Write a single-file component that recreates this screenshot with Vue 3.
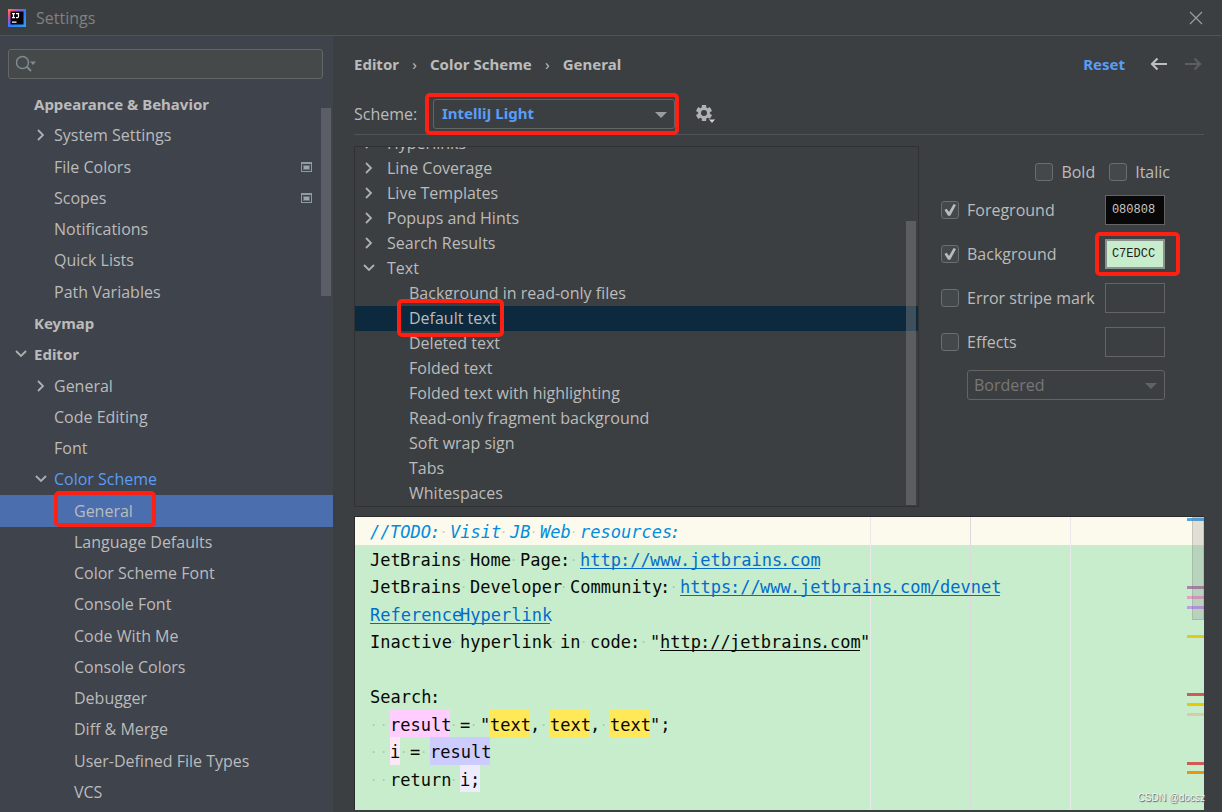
<script setup>
import { ref } from 'vue'

const nav = [
  { label: 'Appearance & Behavior', level: 0, bold: true },
  { label: 'System Settings', level: 1, arrow: 'right' },
  { label: 'File Colors', level: 1, project: true },
  { label: 'Scopes', level: 1, project: true },
  { label: 'Notifications', level: 1 },
  { label: 'Quick Lists', level: 1 },
  { label: 'Path Variables', level: 1 },
  { label: 'Keymap', level: 0, bold: true },
  { label: 'Editor', level: 0, bold: true, arrow: 'down' },
  { label: 'General', level: 1, arrow: 'right' },
  { label: 'Code Editing', level: 1 },
  { label: 'Font', level: 1 },
  { label: 'Color Scheme', level: 1, arrow: 'down', accent: true },
  { label: 'General', level: 2, selected: true },
  { label: 'Language Defaults', level: 2 },
  { label: 'Color Scheme Font', level: 2 },
  { label: 'Console Font', level: 2 },
  { label: 'Code With Me', level: 2 },
  { label: 'Console Colors', level: 2 },
  { label: 'Debugger', level: 2 },
  { label: 'Diff & Merge', level: 2 },
  { label: 'User-Defined File Types', level: 2 },
  { label: 'VCS', level: 2 },
]

const tree = [
  { label: 'Hyperlinks', arrow: 'right' },
  { label: 'Line Coverage', arrow: 'right' },
  { label: 'Live Templates', arrow: 'right' },
  { label: 'Popups and Hints', arrow: 'right' },
  { label: 'Search Results', arrow: 'right' },
  { label: 'Text', arrow: 'down' },
  { label: 'Background in read-only files', child: true },
  { label: 'Default text', child: true, selected: true },
  { label: 'Deleted text', child: true },
  { label: 'Folded text', child: true },
  { label: 'Folded text with highlighting', child: true },
  { label: 'Read-only fragment background', child: true },
  { label: 'Soft wrap sign', child: true },
  { label: 'Tabs', child: true },
  { label: 'Whitespaces', child: true },
]

const options = ref([
  { id: 'foreground', label: 'Foreground', on: true, value: '080808' },
  { id: 'background', label: 'Background', on: true, value: 'C7EDCC', marked: true },
  { id: 'stripe', label: 'Error stripe mark', on: false, value: '' },
  { id: 'effects', label: 'Effects', on: false, value: '' },
])
const bold = ref(false)
const italic = ref(false)

// Each line is a list of [text, kind] runs; runs are cut into words on a 10px column grid.
const CELL = 10
const source = [
  [['//TODO: Visit JB Web resources:', 'todo']],
  [['JetBrains Home Page: '], ['http://www.jetbrains.com', 'link']],
  [['JetBrains Developer Community: '], ['https://www.jetbrains.com/devnet', 'link']],
  [['ReferenceHyperlink', 'link']],
  [['Inactive hyperlink in code: "'], ['http://jetbrains.com', 'inactive'], ['"']],
  [],
  [['Search:']],
  [['  '], ['result', 'write'], [' = "'], ['text', 'found'], [', '], ['text', 'found'], [', '], ['text', 'found'], ['";']],
  [['  '], ['i', 'write-soft'], [' = '], ['result', 'read']],
  [['  return '], ['i;', 'read-soft']],
]
const code = source.map((runs) =>
  runs.map(([text, kind]) => ({
    kind: kind || 'plain',
    tag: kind === 'link' ? 'a' : 'span',
    href: kind === 'link' ? '#' : undefined,
    words: text.match(/ |[A-Z]*[a-z]+|[A-Z]+|[^ \w]+/g).map((word) => ({
      text: word === ' ' ? '·' : word,
      space: word === ' ',
      width: word.length * CELL,
    })),
  })),
)

const marks = [
  { top: 1, color: '#4ea6e0' },
  { top: 69, color: '#ab83ab' },
  { top: 79, color: '#e59fc9' },
  { top: 89, color: '#c199ee' },
  { top: 118, color: '#e3c918' },
  { top: 176, color: '#cf5b56' },
  { top: 186, color: '#e8c800' },
  { top: 196, color: '#d6cda8' },
  { top: 245, color: '#cf5b56' },
  { top: 254, color: '#eb9316' },
]
</script>

<template>
  <div class="window">
    <header class="titlebar">
      <svg class="logo" width="18" height="18" viewBox="0 0 18 18" aria-hidden="true">
        <defs>
          <linearGradient id="ij" x1="0" y1="0" x2="1" y2="1">
            <stop offset="0" stop-color="#fe8a3c" />
            <stop offset="0.18" stop-color="#f0507e" />
            <stop offset="0.36" stop-color="#8a5be0" />
            <stop offset="0.55" stop-color="#2a7dff" />
            <stop offset="1" stop-color="#2aa0f8" />
          </linearGradient>
        </defs>
        <rect width="18" height="18" fill="url(#ij)" />
        <rect x="2.500" y="2.500" width="13" height="13" fill="#0a0308" />
        <path d="M4 4.600h3M5.500 4.600v4M4 8.600h3M8 4.600h2.500v3q0 1-1 1H8M4 13.200h4.500" stroke="#fff" stroke-width="1.200" fill="none" />
      </svg>
      <span class="title">Settings</span>
      <button class="icon-button close" aria-label="Close">
        <svg width="14" height="14" viewBox="0 0 14 14"><path d="M1 1l12 12M13 1L1 13" stroke="#9a9c9d" stroke-width="1.200" /></svg>
      </button>
    </header>

    <div class="body">
      <aside class="sidebar">
        <div class="search">
          <svg width="22" height="18" viewBox="0 0 22 18" aria-hidden="true">
            <circle cx="6.500" cy="7.500" r="6" fill="none" stroke="#7f8b91" stroke-width="1.500" />
            <path d="M10.500 11.500l4.500 4.500" stroke="#7f8b91" stroke-width="2" />
            <path d="M14 6.500h6l-3 3.500z" fill="#7f8b91" />
          </svg>
          <input type="search" aria-label="Search settings" />
        </div>
        <nav class="nav">
          <a
            v-for="(item, i) in nav"
            :key="i"
            href="#"
            class="nav-row"
            :class="['level-' + item.level, { bold: item.bold, accent: item.accent, selected: item.selected }]"
          >
            <span class="arrow">
              <svg v-if="item.arrow" width="12" height="12" viewBox="0 0 12 12" :class="item.arrow">
                <path d="M3 1l5 5-5 5" fill="none" stroke="#adb0b1" stroke-width="1.800" />
              </svg>
            </span>
            <span class="nav-label">{{ item.label }}<i v-if="item.selected" class="marker" /></span>
            <svg v-if="item.project" class="project" width="11" height="10" viewBox="0 0 11 10">
              <path d="M0 0h11v10H0zM1 2v7h9V2z" fill="#8f9aa3" fill-rule="evenodd" />
              <rect x="2" y="3" width="7" height="5" fill="#67727a" />
              <rect x="3" y="4" width="5" height="3" fill="#9aa5ad" />
            </svg>
          </a>
          <span class="nav-thumb" />
        </nav>
      </aside>

      <main class="main">
        <div class="crumbs">
          <a href="#">Editor</a><span class="sep">›</span>
          <a href="#">Color Scheme</a><span class="sep">›</span>
          <a href="#">General</a>
          <span class="spring" />
          <button class="reset">Reset</button>
          <button class="icon-button" aria-label="Back">
            <svg width="18" height="14" viewBox="0 0 18 14"><path d="M17 7H2M7.500 1.500L2 7l5.500 5.500" fill="none" stroke="#bcbec0" stroke-width="2.200" /></svg>
          </button>
          <button class="icon-button" aria-label="Forward" disabled>
            <svg width="18" height="14" viewBox="0 0 18 14"><path d="M1 7h15M10.500 1.500L16 7l-5.500 5.500" fill="none" stroke="#5c5e60" stroke-width="2.200" /></svg>
          </button>
        </div>

        <div class="scheme">
          <label for="scheme">Scheme:</label>
          <span class="marked-select">
            <span class="select-box">
              <select id="scheme"><option>IntelliJ Light</option></select>
              <svg width="12" height="6" viewBox="0 0 12 6"><path d="M0 0h12L6 6z" fill="#9a9da0" /></svg>
            </span>
          </span>
          <button class="icon-button gear" aria-label="Scheme actions">
            <svg width="22" height="20" viewBox="0 0 22 20">
              <g transform="translate(9 9)" fill="#afb1b3">
                <path fill-rule="evenodd" d="M-6 0a6 6 0 1 0 12 0a6 6 0 1 0-12 0zM-3 0a3 3 0 1 1 6 0a3 3 0 1 1-6 0z" />
                <path v-for="n in 6" :key="n" d="M-2.200-8h4.400v3h-4.400z" :transform="`rotate(${n * 60})`" />
              </g>
              <path d="M13 15h8l-4 4.500z" fill="#d0d2d3" stroke="#3c3f41" />
            </svg>
          </button>
        </div>

        <div class="settings">
          <div class="tree" role="tree">
            <div
              v-for="item in tree"
              :key="item.label"
              class="tree-row"
              role="treeitem"
              :class="{ child: item.child, selected: item.selected }"
            >
              <svg v-if="item.arrow" width="12" height="12" viewBox="0 0 12 12" :class="item.arrow">
                <path d="M3 1l5 5-5 5" fill="none" stroke="#adb0b1" stroke-width="1.800" />
              </svg>
              <span class="tree-label">{{ item.label }}<i v-if="item.selected" class="marker" /></span>
            </div>
            <span class="tree-thumb" />
          </div>

          <form class="attributes">
            <div class="styles">
              <label><input v-model="bold" type="checkbox" />Bold</label>
              <label><input v-model="italic" type="checkbox" />Italic</label>
            </div>
            <div v-for="o in options" :key="o.id" class="option">
              <label><input v-model="o.on" type="checkbox" />{{ o.label }}</label>
              <span class="swatch-wrap" :class="{ marked: o.marked }">
                <input v-model="o.value" class="swatch" :class="o.id" type="text" :aria-label="o.label + ' color'" />
              </span>
            </div>
            <span class="select-box effect">
              <select aria-label="Effect type" disabled><option>Bordered</option></select>
              <svg width="12" height="6" viewBox="0 0 12 6"><path d="M0 0h12L6 6z" fill="#606263" /></svg>
            </span>
          </form>
        </div>

        <section class="editor" aria-label="Preview">
          <i class="guide first" /><i class="guide second" /><i class="guide third" />
          <div v-for="(line, i) in code" :key="i" class="line" :class="{ current: i === 0 }">
            <component :is="run.tag" v-for="(run, j) in line" :key="j" :href="run.href" class="run" :class="run.kind">
              <span
                v-for="(word, k) in run.words"
                :key="k"
                class="word"
                :class="{ space: word.space }"
                :style="{ width: word.width + 'px' }"
              >{{ word.text }}</span>
            </component>
          </div>
          <i v-for="m in marks" :key="m.top" class="mark" :style="{ top: m.top + 'px', background: m.color }" />
          <span class="editor-thumb" />
        </section>
        <span class="watermark">CSDN @docsz</span>
      </main>
    </div>
  </div>
</template>

<style>
body {
  background: #3c3f41;
}
</style>

<style scoped>
* {
  box-sizing: border-box;
}
.window {
  display: flex;
  flex-direction: column;
  min-height: 100vh;
  background: #3c3f41;
  color: #bbbbbb;
  font: 16px/24px "Open Sans", "Noto Sans", sans-serif;
}
a {
  color: inherit;
  text-decoration: none;
}
button,
input,
select {
  font: inherit;
  color: inherit;
  margin: 0;
}
button {
  background: none;
  border: 0;
  padding: 0;
}
svg {
  display: block;
  flex: none;
}
.down {
  transform: rotate(90deg);
}
.titlebar {
  display: flex;
  align-items: center;
  height: 36px;
  padding: 0 19px 0 8px;
  gap: 10px;
  border-bottom: 1px solid #515456;
}
.title {
  color: #7f8182;
}
.close {
  margin-left: auto;
}
.body {
  flex: 1;
  display: flex;
}
.sidebar {
  width: 333px;
  flex: none;
  display: flex;
  flex-direction: column;
  background: #3f434c;
  padding-top: 13px;
}
.search {
  display: flex;
  align-items: center;
  height: 30px;
  margin: 0 10px 10px 8px;
  padding-left: 7px;
  border: 1px solid #646767;
  border-radius: 3px;
  background: #45494a;
}
.search input {
  flex: 1;
  min-width: 0;
  background: none;
  border: 0;
  outline: 0;
}
.nav {
  flex: 1;
  position: relative;
  display: flex;
  flex-direction: column;
  padding-bottom: 4px;
}
.nav-row {
  flex: 1;
  display: flex;
  align-items: center;
  padding-right: 21px;
  padding-bottom: 1px;
}
.level-0 {
  padding-left: 14px;
}
.level-1 {
  padding-left: 34px;
}
.level-2 {
  padding-left: 54px;
}
.arrow {
  width: 20px;
  flex: none;
  padding-left: 1px;
}
.bold,
.crumbs,
.reset,
#scheme {
  font-family: "Noto Sans", sans-serif;
  font-size: 15px;
  font-weight: 700;
}
.accent {
  color: #589df6;
}
.nav-row.selected {
  background: #4b6eaf;
}
.nav-label,
.tree-label {
  position: relative;
}
.project {
  margin-left: auto;
}
.marker {
  position: absolute;
  border: 4px solid #ff2014;
  border-radius: 5px;
}
.nav-label .marker {
  inset: -8px -23px -4px -20px;
}
.tree-label .marker {
  inset: -7px -8px -7px -12px;
  z-index: 1;
}
.nav-thumb {
  position: absolute;
  top: 19px;
  right: 2px;
  width: 10px;
  height: 188px;
  background: #5b5e66;
}
.main {
  flex: 1;
  min-width: 0;
  position: relative;
  display: flex;
  flex-direction: column;
  padding: 13px 18px 2px 21px;
}
.crumbs {
  display: flex;
  align-items: center;
  height: 30px;
  padding-bottom: 1px;
}
.sep {
  width: 31px;
  text-align: center;
  font-weight: 400;
}
.spring {
  flex: 1;
}
.reset {
  color: #589df6;
  margin-right: 25px;
}
.crumbs .icon-button + .icon-button {
  margin-left: 16px;
}
.crumbs .icon-button:last-child {
  margin-right: 2px;
}
.scheme {
  display: flex;
  align-items: center;
  height: 56px;
  padding-top: 14px;
  border-bottom: 1px solid #515456;
}
.scheme label {
  width: 71px;
}
.marked-select {
  position: relative;
  z-index: 1;
  flex: none;
  width: 254px;
  height: 42px;
  padding: 2px 0 0 4px;
  border: 4px solid #ff2014;
  border-radius: 5px;
}
.select-box {
  position: relative;
  display: block;
  height: 30px;
  border: 1px solid #646464;
  border-radius: 3px;
}
.select-box select {
  display: block;
  width: 100%;
  height: 100%;
  padding: 0 28px 2px 8px;
  appearance: none;
  background: none;
  border: 0;
  color: #589df6;
  opacity: 1;
}
.select-box svg {
  position: absolute;
  right: 7px;
  top: 12px;
  pointer-events: none;
}
.gear {
  margin-left: 16px;
}
.settings {
  display: flex;
  margin-top: 11px;
}
.tree {
  position: relative;
  flex: 2 1 0;
  height: 361px;
  display: flex;
  flex-direction: column;
  justify-content: flex-end;
  overflow: hidden;
  border: 1px solid #2f3133;
}
.tree-row {
  flex: none;
  display: flex;
  align-items: center;
  gap: 12px;
  height: 25px;
  padding: 0 0 2px 8px;
}
.tree-row.child {
  padding-left: 54px;
}
.tree-row.selected {
  background: #0d293e;
}
.tree-thumb {
  position: absolute;
  right: 2px;
  bottom: 1px;
  width: 10px;
  height: 284px;
  background: rgba(140, 140, 140, 0.4);
}
.attributes {
  width: 285px;
  flex: none;
  padding: 14px 39px 0 22px;
}
.attributes label {
  display: flex;
  align-items: center;
}
.styles {
  display: flex;
  justify-content: flex-end;
  gap: 14px;
  height: 24px;
  margin: 0 -5px 4px 0;
}
input[type='checkbox'] {
  appearance: none;
  flex: none;
  width: 18px;
  height: 18px;
  margin-right: 8px;
  border: 1px solid #6b6d6e;
  border-radius: 3px;
  background: #43494a;
  display: grid;
  place-items: center;
}
input[type='checkbox']:checked::before {
  content: '';
  width: 12px;
  height: 12px;
  background: #bbbbbb;
  clip-path: polygon(4% 50%, 22% 40%, 42% 66%, 80% 0, 100% 8%, 52% 98%, 34% 98%);
}
.option {
  display: flex;
  align-items: center;
  justify-content: space-between;
  height: 44px;
}
.swatch-wrap {
  position: relative;
  display: flex;
}
.marked::after {
  content: '';
  position: absolute;
  inset: -7px -15px -7px -10px;
  border: 4px solid #ff2014;
  border-radius: 5px;
  pointer-events: none;
}
.swatch {
  width: 60px;
  height: 30px;
  padding: 0 3px 0 0;
  border: 1px solid #646464;
  background: none;
  text-align: center;
  font: 12px "Liberation Mono", monospace;
}
.foreground {
  background: #080808;
  color: #c8c8c8;
}
.background {
  background: #c7edcc;
  color: #222222;
  border: 2px solid #8c918d;
}
.effect {
  margin: 6px 0 0 26px;
}
.effect select {
  color: #777777;
  padding-left: 6px;
  padding-bottom: 0;
}
.editor {
  flex: 1;
  position: relative;
  display: flex;
  flex-direction: column;
  margin-top: 9px;
  padding-bottom: 18px;
  border: 1px solid #2b2b2b;
  border-width: 1px 0 0 1px;
  background: #c7edcc;
  color: #080808;
  font: 17px/24px "DejaVu Sans Mono", monospace;
}
.line {
  flex: 1;
  display: flex;
  min-height: 27px;
  padding-left: 15px;
  white-space: pre;
}
.current {
  background: #fcfaed;
}
.run {
  display: flex;
  flex: none;
  position: relative;
  padding-top: 3px;
}
.word {
  flex: none;
}
.todo {
  color: #008dde;
  font-style: italic;
}
.space {
  color: #a9c9ae;
  font-size: 12px;
}
.todo .space {
  color: #c9c8bc;
}
.link {
  color: #006dcc;
}
.link .word,
.inactive .word {
  height: 21px;
  border-bottom: 1px solid currentColor;
}
.write {
  background: #ffcdff;
}
.write-soft {
  background: #fce8f4;
}
.found {
  background: #ffe959;
}
.read {
  background: #ccccff;
}
.read-soft {
  background: #edebfc;
}
.guide {
  position: absolute;
  top: 0;
  bottom: 0;
  width: 1px;
  background: #ebe8ec;
}
.first {
  left: 515px;
}
.second {
  left: 615px;
  background: #dcdadd;
}
.third {
  left: 715px;
}
.mark {
  position: absolute;
  right: 0;
  width: 17px;
  height: 3px;
}
.editor-thumb {
  position: absolute;
  top: 0;
  right: 0;
  width: 12px;
  height: 103px;
  background: rgba(120, 110, 120, 0.2);
  border: 1px solid rgba(120, 120, 120, 0.25);
}
.watermark {
  position: absolute;
  right: 17px;
  bottom: 6px;
  font: 10px/16px "Liberation Sans", sans-serif;
  color: #f4f4f4;
  text-shadow: 1px 1px 1px #555555;
}
</style>
